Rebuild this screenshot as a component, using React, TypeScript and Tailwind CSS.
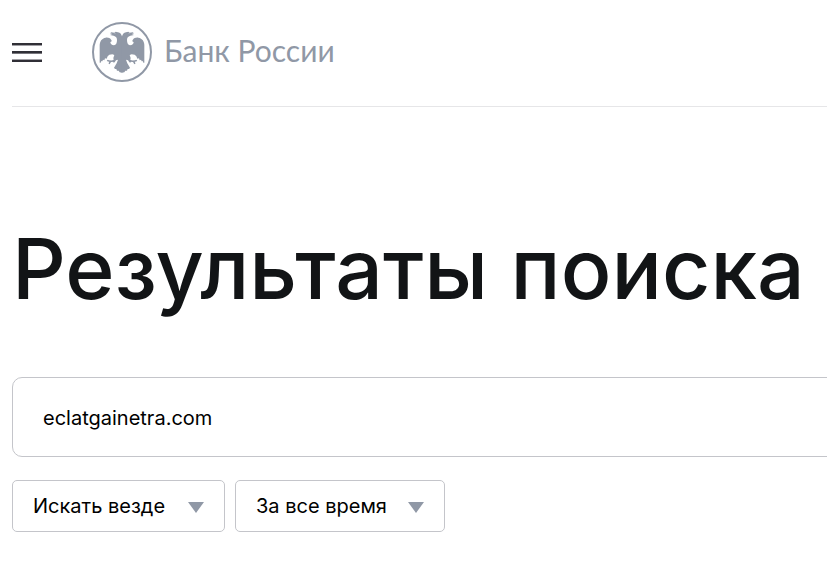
import { useState } from "react";

interface FilterSelectProps {
  label: string;
  value: string;
  options: string[];
  className: string;
}

// half of the eagle, mirrored around x = 90
function EagleHalf() {
  return (
    <>
      <path
        fill="currentColor"
        d="M91 47 C89 38 85 31 78 31 L71 29 L67 32 L58 31 L54 34 L61 36 L54 39 L65 41 C72 43 75 47 75 54 C75 63 72 69 66 70 C59 70 55 65 55 60 C59 59 60 57 58 54 C54 48 48 46 41 47 C29 49 23 58 23 70 L23 122 L26 122 L28 117 L31 118 L33 113 L37 115 L39 109 L44 110 L47 103 L52 98 L61 97 L67 99 L64 108 L65 113 L59 116 L50 115 L48 113 L44 115 L50 118 L53 119 L50 125 L53 127 L57 120 L62 119 L66 122 L69 119 L72 115 L78 113 L74 124 L66 137 L69 141 L73 141 L75 146 L80 146 L83 151 L91 152 Z"
      />
      <path d="M45 116 L53 118 L62 117 M54 118 L51 124" fill="none" stroke="currentColor" strokeWidth="3" />
      <circle cx="69" cy="34" r="1" fill="white" />
    </>
  );
}

function Logo() {
  return (
    <a href="#" className="flex items-center gap-3 text-[#9098a6]">
      <svg viewBox="0 0 180 180" className="h-15 w-15" aria-hidden="true">
        <circle cx="90" cy="90" r="87" fill="none" stroke="currentColor" strokeWidth="6" />
        <EagleHalf />
        <g transform="translate(180 0) scale(-1 1)">
          <EagleHalf />
        </g>
      </svg>
      <span className="pb-1 font-['Lato',sans-serif] text-3xl leading-9">Банк России</span>
    </a>
  );
}

function FilterSelect({ label, value, options, className }: FilterSelectProps) {
  const [selected, setSelected] = useState(value);

  return (
    <div className={`relative ${className}`}>
      <select
        aria-label={label}
        value={selected}
        onChange={(e) => setSelected(e.target.value)}
        className="h-[52px] w-full appearance-none rounded-[5px] border border-[#c4c5ca] bg-white pr-12 pl-5 text-xl text-black"
      >
        {options.map((option) => (
          <option key={option}>{option}</option>
        ))}
      </select>
      <svg
        viewBox="0 0 16 11"
        className="pointer-events-none absolute top-[22px] right-[21px] h-[11px] w-4 text-[#9098a6]"
        aria-hidden="true"
      >
        <path d="M0 0h16L8 11z" fill="currentColor" />
      </svg>
    </div>
  );
}

export default function App() {
  const [query, setQuery] = useState("eclatgainetra.com");

  return (
    <div className="overflow-x-hidden bg-white pl-3 font-['Inter',sans-serif] text-black">
      <header className="flex items-center gap-[50px] border-b border-[#e6e6e8] pt-[22px] pb-6">
        <button type="button" aria-label="Меню" className="flex w-[30px] flex-col gap-[5px]">
          <span className="h-[3px] w-full border-b border-[#a09fa4] bg-[#302f36]" />
          <span className="h-[3px] w-full border-b border-[#77767c] bg-[#302f36]" />
          <span className="h-[3px] w-full border-t border-[#a09fa4] bg-[#302f36]" />
        </button>
        <Logo />
      </header>

      <main className="pt-28">
        <h1 className="text-[84px] leading-[100px] font-medium whitespace-nowrap text-[#121416]">
          Результаты поиска
        </h1>

        <form className="pt-[58px]" onSubmit={(e) => e.preventDefault()}>
          <div className="-mr-3">
            <input
              type="text"
              aria-label="Поиск"
              value={query}
              onChange={(e) => setQuery(e.target.value)}
              className="block h-20 w-full rounded-[10px] border border-[#c4c5ca] bg-white px-[30px] pt-0.5 text-xl"
            />
          </div>
          <div className="flex gap-2.5 pt-[23px]">
            <FilterSelect
              label="Где искать"
              value="Искать везде"
              options={["Искать везде"]}
              className="w-[213px]"
            />
            <FilterSelect
              label="Период"
              value="За все время"
              options={["За все время"]}
              className="w-[210px]"
            />
          </div>
        </form>
      </main>
    </div>
  );
}
